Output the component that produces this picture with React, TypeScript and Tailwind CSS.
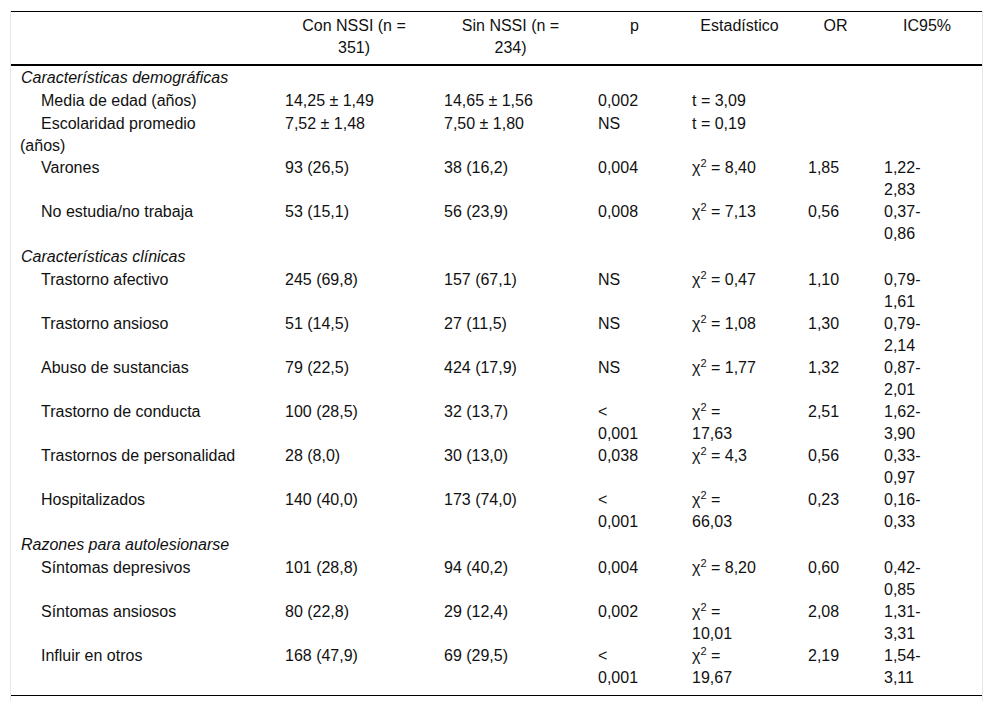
import React from 'react';

type Row =
  | { section: string }
  | { label: React.ReactNode; cells: React.ReactNode[]; tall?: boolean };

const Chi = ({ v }: { v: React.ReactNode }) => (
  <>
    χ<sup className="relative -top-[6px] text-[11px] leading-none">2</sup> = {v}
  </>
);

const rows: Row[] = [
  { section: 'Características demográficas' },
  { label: 'Media de edad (años)', cells: ['14,25 ± 1,49', '14,65 ± 1,56', '0,002', 't = 3,09', '', ''] },
  {
    label: (
      <>
        Escolaridad promedio
        <br />
        (años)
      </>
    ),
    cells: ['7,52 ± 1,48', '7,50 ± 1,80', 'NS', 't = 0,19', '', ''],
    tall: true,
  },
  { label: 'Varones', cells: ['93 (26,5)', '38 (16,2)', '0,004', <Chi v="8,40" />, '1,85', <>1,22-<br />2,83</>], tall: true },
  { label: 'No estudia/no trabaja', cells: ['53 (15,1)', '56 (23,9)', '0,008', <Chi v="7,13" />, '0,56', <>0,37-<br />0,86</>], tall: true },
  { section: 'Características clínicas' },
  { label: 'Trastorno afectivo', cells: ['245 (69,8)', '157 (67,1)', 'NS', <Chi v="0,47" />, '1,10', <>0,79-<br />1,61</>], tall: true },
  { label: 'Trastorno ansioso', cells: ['51 (14,5)', '27 (11,5)', 'NS', <Chi v="1,08" />, '1,30', <>0,79-<br />2,14</>], tall: true },
  { label: 'Abuso de sustancias', cells: ['79 (22,5)', '424 (17,9)', 'NS', <Chi v="1,77" />, '1,32', <>0,87-<br />2,01</>], tall: true },
  {
    label: 'Trastorno de conducta',
    cells: ['100 (28,5)', '32 (13,7)', <>&lt;<br />0,001</>, <Chi v={<><br />17,63</>} />, '2,51', <>1,62-<br />3,90</>],
    tall: true,
  },
  { label: 'Trastornos de personalidad', cells: ['28 (8,0)', '30 (13,0)', '0,038', <Chi v="4,3" />, '0,56', <>0,33-<br />0,97</>], tall: true },
  {
    label: 'Hospitalizados',
    cells: ['140 (40,0)', '173 (74,0)', <>&lt;<br />0,001</>, <Chi v={<><br />66,03</>} />, '0,23', <>0,16-<br />0,33</>],
    tall: true,
  },
  { section: 'Razones para autolesionarse' },
  { label: 'Síntomas depresivos', cells: ['101 (28,8)', '94 (40,2)', '0,004', <Chi v="8,20" />, '0,60', <>0,42-<br />0,85</>], tall: true },
  {
    label: 'Síntomas ansiosos',
    cells: ['80 (22,8)', '29 (12,4)', '0,002', <Chi v={<><br />10,01</>} />, '2,08', <>1,31-<br />3,31</>],
    tall: true,
  },
  {
    label: 'Influir en otros',
    cells: ['168 (47,9)', '69 (29,5)', <>&lt;<br />0,001</>, <Chi v={<><br />19,67</>} />, '2,19', <>1,54-<br />3,11</>],
    tall: true,
  },
];

const headers: React.ReactNode[] = [
  '',
  <>Con NSSI (n =<br />351)</>,
  <>Sin NSSI (n =<br />234)</>,
  'p',
  'Estadístico',
  'OR',
  'IC95%',
];

export default function App() {
  return (
    <div className="min-h-[707px] w-[992px] bg-white pt-[11px] font-['Liberation_Sans',Arial,sans-serif] text-[16px] leading-[22px] text-[#111]">
      <div className="ml-[10px] w-[973px] border-x border-[#e6e6e6] pb-[5px] border-b-0">
        <table className="w-[971px] table-fixed border-collapse">
          <colgroup>
            <col className="w-[265px]" />
            <col className="w-[159px]" />
            <col className="w-[154px]" />
            <col className="w-[94px]" />
            <col className="w-[116px]" />
            <col className="w-[76px]" />
            <col className="w-[107px]" />
          </colgroup>
          <thead>
            <tr className="border-t border-b-2 border-black">
              {headers.map((h, i) => (
                <th key={i} className="pt-[3px] pb-[5px] pl-[9px] pr-[12px] text-center align-top font-normal">
                  {h}
                  {i === 0 && <span>&nbsp;<br />&nbsp;</span>}
                </th>
              ))}
            </tr>
          </thead>
          <tbody className="border-b border-black">
            {rows.map((r, i) => {
              const last = i === rows.length - 1;
              if ('section' in r) {
                return (
                  <tr key={i}>
                    <td colSpan={7} className="py-[1px] pl-[10px] italic">
                      {r.section}
                    </td>
                  </tr>
                );
              }
              return (
                <tr key={i} className="align-top">
                  <td className={`pl-[9px] pr-[4px] indent-[21px] ${r.tall ? '' : 'pb-[1px]'} ${last ? 'pb-[6px]' : ''}`}>
                    {r.label}
                  </td>
                  {r.cells.map((c, j) => (
                    <td key={j} className={`pl-[9px] pr-[4px] ${last ? 'pb-[6px]' : ''}`}>
                      {c}
                    </td>
                  ))}
                </tr>
              );
            })}
          </tbody>
        </table>
      </div>
    </div>
  );
}
